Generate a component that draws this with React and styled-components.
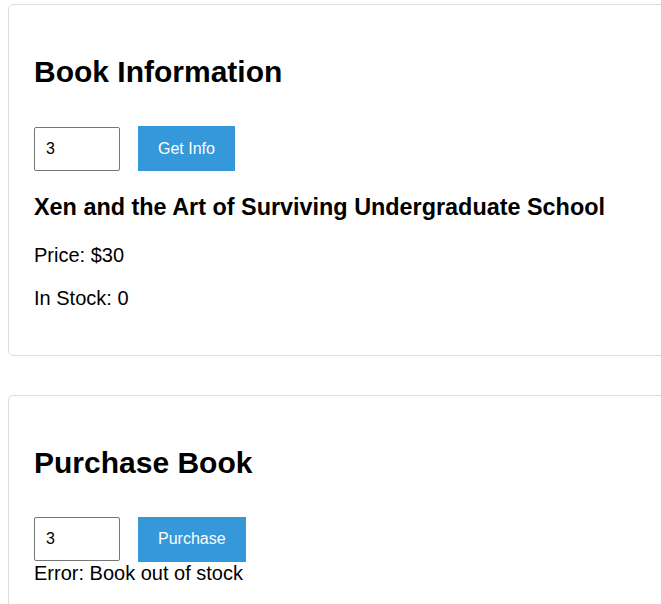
import React from 'react';
import styled, { createGlobalStyle } from 'styled-components';

function App() {
  const [infoId, setInfoId] = React.useState('3');
  const [purchaseId, setPurchaseId] = React.useState('3');

  const book = {
    title: 'Xen and the Art of Surviving Undergraduate School',
    price: 30,
    stock: 0,
  };

  return (
    <>
      <GlobalStyle />
      <Page>
        <Card>
          <Heading>Book Information</Heading>
          <Row>
            <NumberInput
              type='text'
              value={infoId}
              onChange={(event) => setInfoId(event.target.value)}
            />
            <Button>Get Info</Button>
          </Row>
          <Title>{book.title}</Title>
          <Detail>Price: ${book.price}</Detail>
          <Detail>In Stock: {book.stock}</Detail>
        </Card>

        <Card>
          <Heading>Purchase Book</Heading>
          <Row>
            <NumberInput
              type='text'
              value={purchaseId}
              onChange={(event) => setPurchaseId(event.target.value)}
            />
            <Button>Purchase</Button>
          </Row>
          {book.stock === 0 && <Message>Error: Book out of stock</Message>}
        </Card>
      </Page>
    </>
  );
}

export default App;

const GlobalStyle = createGlobalStyle`
  html, body {
    margin: 0;
    overflow: hidden;
    background: #fff;
  }

  body {
    font-family: 'Liberation Sans', Arial, sans-serif;
    font-size: 20px;
    color: #000;
  }
`;

const Page = styled.div`
  display: flex;
  flex-direction: column;
  gap: 38.5px;
  padding: 4px 0 0 8px;
`;

const Card = styled.section`
  width: 760px;
  flex-shrink: 0;
  padding: 25px;
  border: 1px solid #ddd;
  border-radius: 5px;
`;

const Heading = styled.h2`
  margin: 25px 0 37px;
  font-size: 30px;
  font-weight: bold;
`;

const Row = styled.div`
  display: flex;
  align-items: center;
  gap: 18px;
`;

const NumberInput = styled.input`
  box-sizing: border-box;
  width: 86px;
  height: 44px;
  padding: 0 11px;
  border: 1px solid #767676;
  border-radius: 2px;
  font-family: 'Liberation Sans', Arial, sans-serif;
  font-size: 16px;
  color: #000;
  background: #fff;
`;

const Button = styled.button`
  height: 45px;
  padding: 0 20px;
  border: none;
  border-radius: 0;
  background-color: #3498db;
  color: #fff;
  font-family: 'Liberation Sans', Arial, sans-serif;
  font-size: 16px;
  cursor: pointer;
`;

const Title = styled.h3`
  margin: 23px 0;
  font-size: 23.4px;
  font-weight: bold;
`;

const Detail = styled.p`
  margin: 20px 0;
`;

const Message = styled.div`
  line-height: normal;
`;
